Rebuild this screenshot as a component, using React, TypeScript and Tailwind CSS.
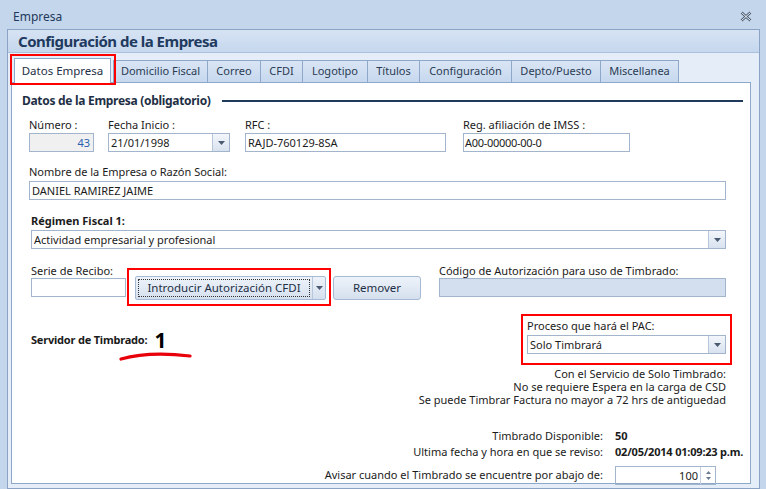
import React from "react";

const font = { fontFamily: '"Noto Sans", "Open Sans", sans-serif' };

function Arrow() {
  return (
    <svg width="7" height="4" viewBox="0 0 7 4">
      <path d="M0 0 L7 0 L3.5 4 Z" fill="#4a5a70" />
    </svg>
  );
}

function DropBtn() {
  return (
    <div className="w-[17px] h-full flex items-center justify-center border-l border-[#b7c7db] bg-gradient-to-b from-[#f3f6fb] to-[#d8e2ef]">
      <Arrow />
    </div>
  );
}

const tabs: [string, number][] = [
  ["Domicilio Fiscal", 95],
  ["Correo", 53],
  ["CFDI", 42],
  ["Logotipo", 65],
  ["Títulos", 52],
  ["Configuración", 92],
  ["Depto/Puesto", 89],
  ["Miscellanea", 78],
];

export default function App() {
  return (
    <div
      className="w-[766px] h-[489px] overflow-hidden bg-[#c4d6eb] flex flex-col text-[11px] text-[#1b1b1b]"
      style={font}
    >
      {/* title bar */}
      <div className="h-[29px] flex items-center justify-between pl-[13px] pr-[14px] pt-[4px] shrink-0">
        <span className="text-[12px] text-[#1e395b]">Empresa</span>
        <svg width="12" height="11" viewBox="0 0 12 11">
          <path d="M1.5 1.5 L10.5 9.5 M10.5 1.5 L1.5 9.5" stroke="#4b5b70" strokeWidth="2.6" fill="none" />
          <path d="M1.5 1.5 L10.5 9.5 M10.5 1.5 L1.5 9.5" stroke="#eef3f9" strokeWidth="1" fill="none" />
        </svg>
      </div>

      {/* inner panel */}
      <div className="ml-[7px] mr-[6px] flex-1 border border-[#8ba4c5] bg-[#e5edf8] flex flex-col min-h-0">
        <div className="h-[23px] shrink-0 flex items-center pl-[10px] bg-gradient-to-b from-[#d6e3f3] to-[#c6d8ee] border-b border-[#aac0dc]">
          <span className="text-[15px] font-bold text-[#1f3a5f] tracking-[-0.5px]">Configuración de la Empresa</span>
        </div>

        {/* tab strip */}
        <div className="h-[29px] shrink-0 flex items-end pl-[6px]">
          <div className="relative w-[97px] bg-white border border-b-0 border-[#8ea8c9] flex items-center justify-center z-10 -mb-[1px] h-[25px]">
            <span className="text-[11.5px] text-[#1e2f45]">Datos Empresa</span>
            <div className="absolute left-[-5px] top-[-5px] w-[106px] h-[31px] border-2 border-[#ff0000]" />
          </div>
          <div className="w-[2px]" />
          {tabs.map(([t, w], i) => (
            <div
              key={t}
              className={
                "h-[22px] bg-gradient-to-b from-[#d9e5f4] to-[#c7d8ee] border-t border-r border-[#8ea8c9] flex items-center justify-center " +
                (i === 0 ? "border-l" : "")
              }
              style={{ width: w }}
            >
              <span className="text-[11px] text-[#2a3b52]">{t}</span>
            </div>
          ))}
        </div>

        {/* content */}
        <div className="ml-[3px] mr-[8px] flex-1 bg-white border border-[#8ea8c9] flex flex-col min-h-0 relative">
          {/* heading */}
          <div className="mt-[10px] h-[16px] flex items-center pl-[10px] pr-[7px]">
            <span className="text-[12px] font-bold text-[#1e2f45] tracking-[-0.3px]">Datos de la Empresa (obligatorio)</span>
            <div className="flex-1 h-[2px] bg-[#1f3a5a] ml-[11px]" />
          </div>

          {/* row 1 */}
          <div className="mt-[8px] flex pl-[17px]">
            <div className="w-[65px] flex flex-col">
              <div className="h-[16px] leading-[16px]">Número :</div>
              <div className="h-[19px] border border-[#a3b5cc] bg-[#f0f0f0] text-right pr-[3px] text-[#2a5fb0] leading-[17px]">43</div>
            </div>
            <div className="w-[122px] ml-[14px] flex flex-col">
              <div className="h-[16px] leading-[16px]">Fecha Inicio :</div>
              <div className="h-[19px] border border-[#a3b5cc] flex">
                <div className="flex-1 pl-[2px] leading-[17px]">21/01/1998</div>
                <DropBtn />
              </div>
            </div>
            <div className="w-[201px] ml-[15px] flex flex-col">
              <div className="h-[16px] leading-[16px]">RFC :</div>
              <div className="h-[19px] border border-[#a3b5cc] pl-[2px] leading-[17px]">RAJD-760129-8SA</div>
            </div>
            <div className="w-[167px] ml-[17px] flex flex-col">
              <div className="h-[16px] leading-[16px]">Reg. afiliación de IMSS :</div>
              <div className="h-[19px] border border-[#a3b5cc] pl-[1px] leading-[17px] tracking-[-0.3px]">A00-00000-00-0</div>
            </div>
          </div>

          {/* row 2 */}
          <div className="mt-[12px] flex flex-col pl-[17px]">
            <div className="h-[17px] leading-[16px]">Nombre de la Empresa o Razón Social:</div>
            <div className="w-[697px] h-[19px] border border-[#a3b5cc] pl-[2px] leading-[17px]">DANIEL RAMIREZ JAIME</div>
          </div>

          {/* row 3 */}
          <div className="mt-[13px] flex flex-col pl-[19px]">
            <div className="h-[17px] leading-[16px] font-bold">Régimen Fiscal 1:</div>
            <div className="w-[695px] h-[19px] border border-[#a3b5cc] flex">
              <div className="flex-1 pl-[2px] leading-[17px]">Actividad empresarial y profesional</div>
              <DropBtn />
            </div>
          </div>

          {/* row 4 */}
          <div className="mt-[14px] flex items-start pl-[19px]">
            <div className="w-[95px] flex flex-col">
              <div className="h-[15px] leading-[15px]">Serie de Recibo:</div>
              <div className="h-[19px] border border-[#a3b5cc]" />
            </div>
            <div className="ml-[1px] mt-[5px] border-2 border-[#ff0000] pl-[6px] pr-[3px] pt-[6px] pb-[4px]">
              <div className="w-[191px] h-[24px] flex rounded-[2px] border border-[#a7bad3] bg-gradient-to-b from-[#eef3fa] to-[#d5e0ee]">
                <div className="w-[172px] m-[2px] border border-dotted border-[#333] flex items-center justify-center text-[11.5px] text-[#1e2f45]">
                  Introducir Autorización CFDI
                </div>
                <div className="flex-1 border-l border-[#b7c7db] flex items-center justify-center">
                  <Arrow />
                </div>
              </div>
            </div>
            <div className="ml-[2px] mt-[13px] w-[88px] h-[24px] rounded-[3px] border border-[#a7bad3] bg-gradient-to-b from-[#eef3fa] to-[#d5e0ee] flex items-center justify-center text-[11.5px] text-[#1e2f45]">
              Remover
            </div>
            <div className="ml-[18px] w-[287px] flex flex-col">
              <div className="h-[15px] leading-[15px]">Código de Autorización para uso de Timbrado:</div>
              <div className="h-[19px] border border-[#a3b5cc] bg-[#d3dfee]" />
            </div>
          </div>

          {/* row 5 */}
          <div className="mt-[8px] flex items-start pl-[19px]">
            <div className="relative w-[490px] h-[50px]">
              <div className="absolute left-0 top-[16px] flex items-center gap-[7px]">
                <span className="font-bold tracking-[-0.2px]">Servidor de Timbrado:</span>
                <span className="text-[21px] font-bold leading-[20px] text-black">1</span>
              </div>
              <svg className="absolute left-[88px] top-[38px]" width="74" height="10" viewBox="0 0 74 10">
                <path d="M2 7 C 20 2, 45 1, 71 4" stroke="#e8000a" strokeWidth="3.2" fill="none" strokeLinecap="round" />
              </svg>
            </div>
            <div className="border-2 border-[#ff0000] pl-[4px] pr-[4px] pt-[2px] pb-[9px]">
              <div className="h-[17px] leading-[16px]">Proceso que hará el PAC:</div>
              <div className="w-[199px] h-[19px] border border-[#a3b5cc] flex">
                <div className="flex-1 pl-[2px] leading-[17px]">Solo Timbrará</div>
                <DropBtn />
              </div>
            </div>
          </div>

          {/* info */}
          <div className="mt-[2px] w-[714px] flex flex-col items-end leading-[13px]">
            <div>Con el Servicio de Solo Timbrado:</div>
            <div>No se requiere Espera en la carga de CSD</div>
            <div>Se puede Timbrar Factura no mayor a 72 hrs de antiguedad</div>
          </div>

          <div className="mt-[22px] flex flex-col">
            <div className="flex h-[16px] items-center">
              <div className="w-[591px] text-right">Timbrado Disponible:</div>
              <div className="ml-[12px] font-bold">50</div>
            </div>
            <div className="flex h-[16px] items-center">
              <div className="w-[591px] text-right">Ultima fecha y hora en que se reviso:</div>
              <div className="ml-[12px] font-bold tracking-[-0.2px]">02/05/2014 01:09:23 p.m.</div>
            </div>
            <div className="flex items-center mt-[6px]">
              <div className="w-[591px] text-right">Avisar cuando el Timbrado se encuentre por abajo de:</div>
              <div className="ml-[12px] w-[101px] h-[19px] border border-[#a3b5cc] flex">
                <div className="flex-1 text-right pr-[2px] leading-[17px]">100</div>
                <div className="w-[15px] border-l border-[#c4d2e3] flex flex-col items-center justify-center gap-[3px]">
                  <svg width="5" height="3" viewBox="0 0 5 3"><path d="M0 3 L5 3 L2.5 0 Z" fill="#6a7a90" /></svg>
                  <svg width="5" height="3" viewBox="0 0 5 3"><path d="M0 0 L5 0 L2.5 3 Z" fill="#6a7a90" /></svg>
                </div>
              </div>
            </div>
          </div>
        </div>
        <div className="h-[4px] shrink-0" />
      </div>
    </div>
  );
}
